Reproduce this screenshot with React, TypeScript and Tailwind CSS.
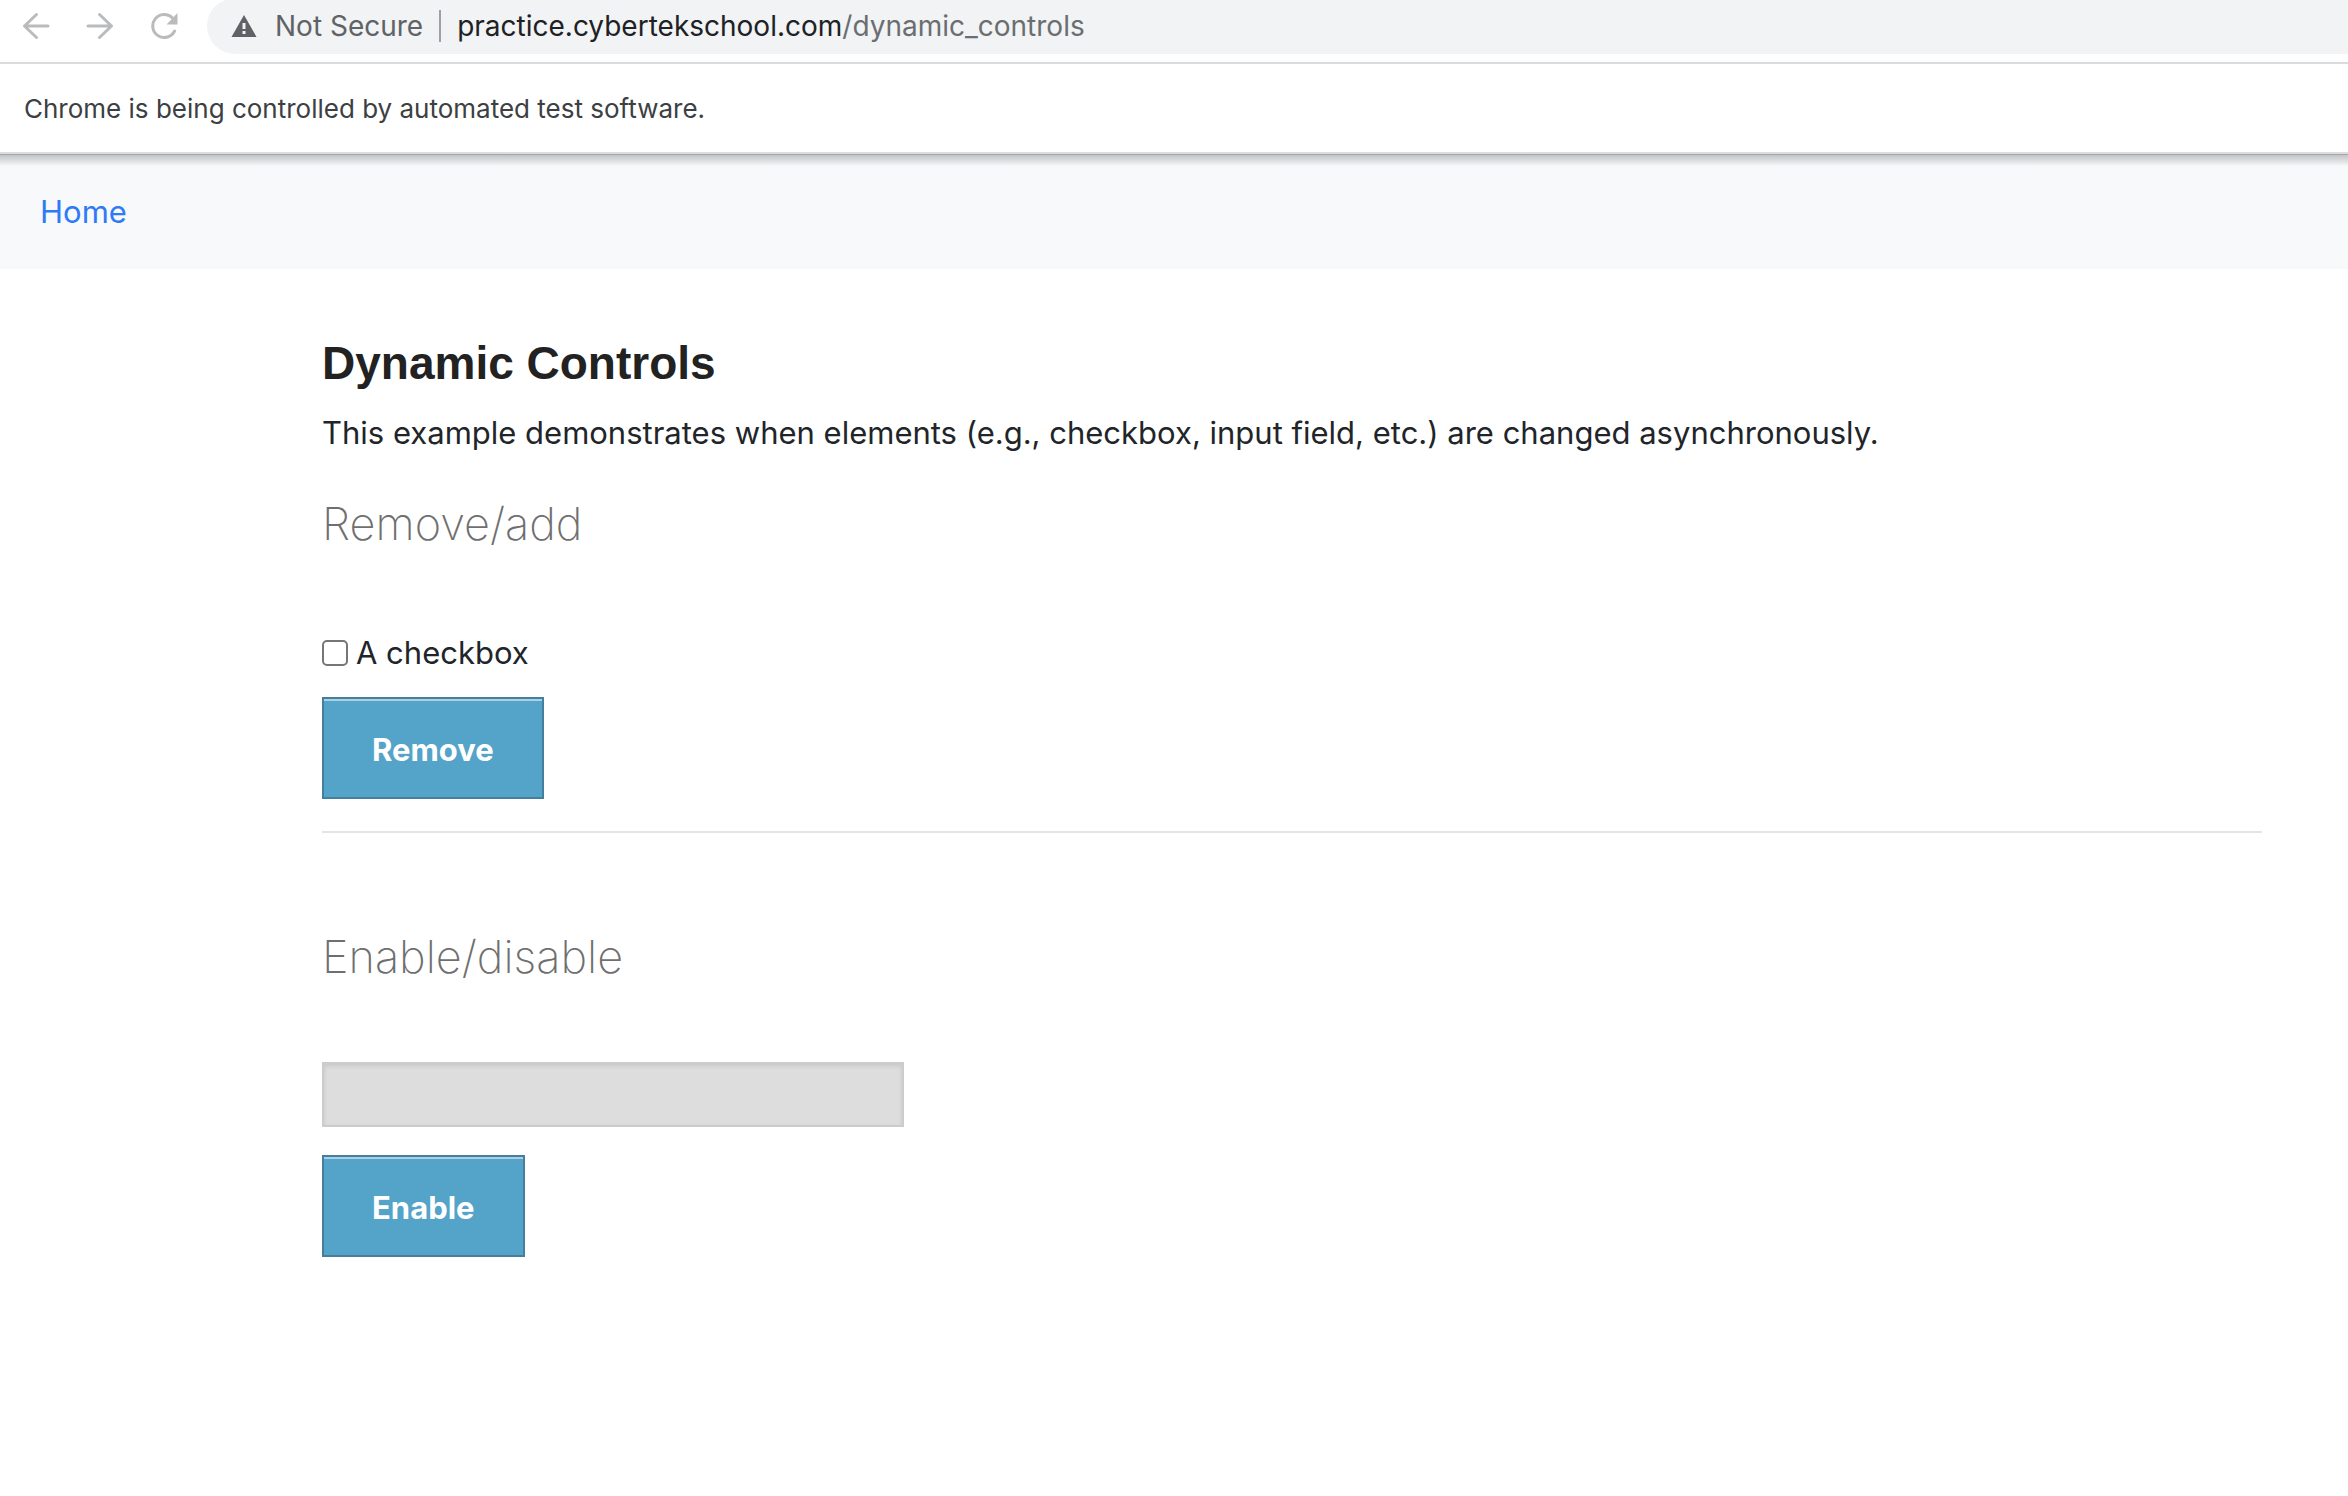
import React from "react";

function BackIcon() {
  return (
    <svg viewBox="0 0 28 28" className="size-7" fill="none" stroke="#b9bbbd" strokeWidth="3" strokeLinecap="round" strokeLinejoin="round" aria-hidden="true">
      <path d="M26 14H2.5M14.5 2.5 2.5 14l12 11.5" />
    </svg>
  );
}

function ForwardIcon() {
  return (
    <svg viewBox="0 0 28 28" className="size-7" fill="none" stroke="#b9bbbd" strokeWidth="3" strokeLinecap="round" strokeLinejoin="round" aria-hidden="true">
      <path d="M2 14h23.5M13.5 2.5l12 11.5-12 11.5" />
    </svg>
  );
}

function ReloadIcon() {
  return (
    <svg viewBox="0 0 28 28" className="size-7" aria-hidden="true">
      <path d="M24.6 19A11.5 11.5 0 1 1 22.3 5.8" fill="none" stroke="#b9bbbd" strokeWidth="3" strokeLinecap="round" />
      <path d="M27.5 1v11.5H16.5z" fill="#b9bbbd" />
    </svg>
  );
}

function WarningIcon() {
  return (
    <svg viewBox="0 0 26 22" className="h-[22px] w-[26px]" aria-hidden="true">
      <path d="M13 0 25.5 22H.5z" fill="#5f6368" />
      <path d="M11.5 8h3v6h-3zM11.5 16h3v3h-3z" fill="#f1f3f4" />
    </svg>
  );
}

function ActionButton({ children }: { children: React.ReactNode }) {
  return (
    <button
      type="button"
      className="block h-[102px] border-2 border-[#457f9d] bg-[#54a3c8] px-12 pt-1 text-[31px] leading-[48px] font-bold text-white shadow-[inset_0_2px_0_#a9d1e3]"
    >
      {children}
    </button>
  );
}

function SectionTitle({ children }: { children: React.ReactNode }) {
  return (
    <h4 className="text-[45px] leading-[60px] font-extralight text-[#6f6f6f]">
      {children}
    </h4>
  );
}

export default function App() {
  return (
    <div className="min-h-screen bg-white font-['Inter',sans-serif] text-[31px] leading-[48px] text-[#212529]">
      <header>
        <div className="flex h-16 items-start border-b-2 border-[#dadbdc]">
          <div className="flex h-[52px] items-center gap-9 pr-[29px] pl-[22px]">
            <button type="button" aria-label="Back"><BackIcon /></button>
            <button type="button" aria-label="Forward"><ForwardIcon /></button>
            <button type="button" aria-label="Reload"><ReloadIcon /></button>
          </div>
          <div className="-mt-0.5 flex h-14 flex-1 items-center rounded-l-full bg-[#f1f3f4] pl-6 text-[28px] leading-8 whitespace-nowrap">
            <WarningIcon />
            <span className="ml-[18px] text-[#5f6368]">Not Secure</span>
            <span className="mx-4 h-8 w-0.5 bg-[#9aa0a6]" />
            <span className="text-[#202124]">practice.cybertekschool.com</span>
            <span className="text-[#6b6e71]">/dynamic_controls</span>
          </div>
        </div>
        <div className="flex h-[90px] items-center border-b-2 border-[#dcdddf] pt-0.5 pl-6 text-[26px] leading-8 text-[#3c4043]">
          Chrome is being controlled by automated test software.
        </div>
      </header>

      <nav className="flex h-[115px] items-center border-t border-[#a5a6a8] bg-[#f8f9fb] bg-linear-to-b from-[#c2c3c6] to-[#f8f9fb] to-[11px] pl-10">
        <a href="#home" className="text-[#2f7bf6]">Home</a>
      </nav>

      <main className="pt-16 pr-[86px] pl-[322px]">
        <h1 className="font-['Liberation_Sans',Arial,sans-serif] text-[46px] leading-[60px] font-bold text-[#222222]">
          Dynamic Controls
        </h1>
        <p className="mt-4">
          This example demonstrates when elements (e.g., checkbox, input field, etc.) are changed asynchronously.
        </p>

        <section className="mt-[37px]">
          <SectionTitle>Remove/add</SectionTitle>
          <form className="mt-[75px]">
            <label className="flex items-center gap-2">
              <input
                type="checkbox"
                className="size-[26px] appearance-none rounded-[5px] border-2 border-[#767676] bg-white checked:bg-[#54a3c8]"
              />
              A checkbox
            </label>
            <div className="mt-5">
              <ActionButton>Remove</ActionButton>
            </div>
          </form>
        </section>

        <hr className="mt-8 border-t-2 border-[#e5e5e5]" />

        <section className="mt-[94px]">
          <SectionTitle>Enable/disable</SectionTitle>
          <form className="mt-[75px]">
            <input
              type="text"
              disabled
              aria-label="Text field"
              className="block h-[65px] w-[30%] border-2 border-[#cccccc] bg-[#dddddd] px-4 shadow-[inset_0_2px_4px_rgba(0,0,0,0.1)]"
            />
            <div className="mt-7">
              <ActionButton>Enable</ActionButton>
            </div>
          </form>
        </section>
      </main>
    </div>
  );
}
